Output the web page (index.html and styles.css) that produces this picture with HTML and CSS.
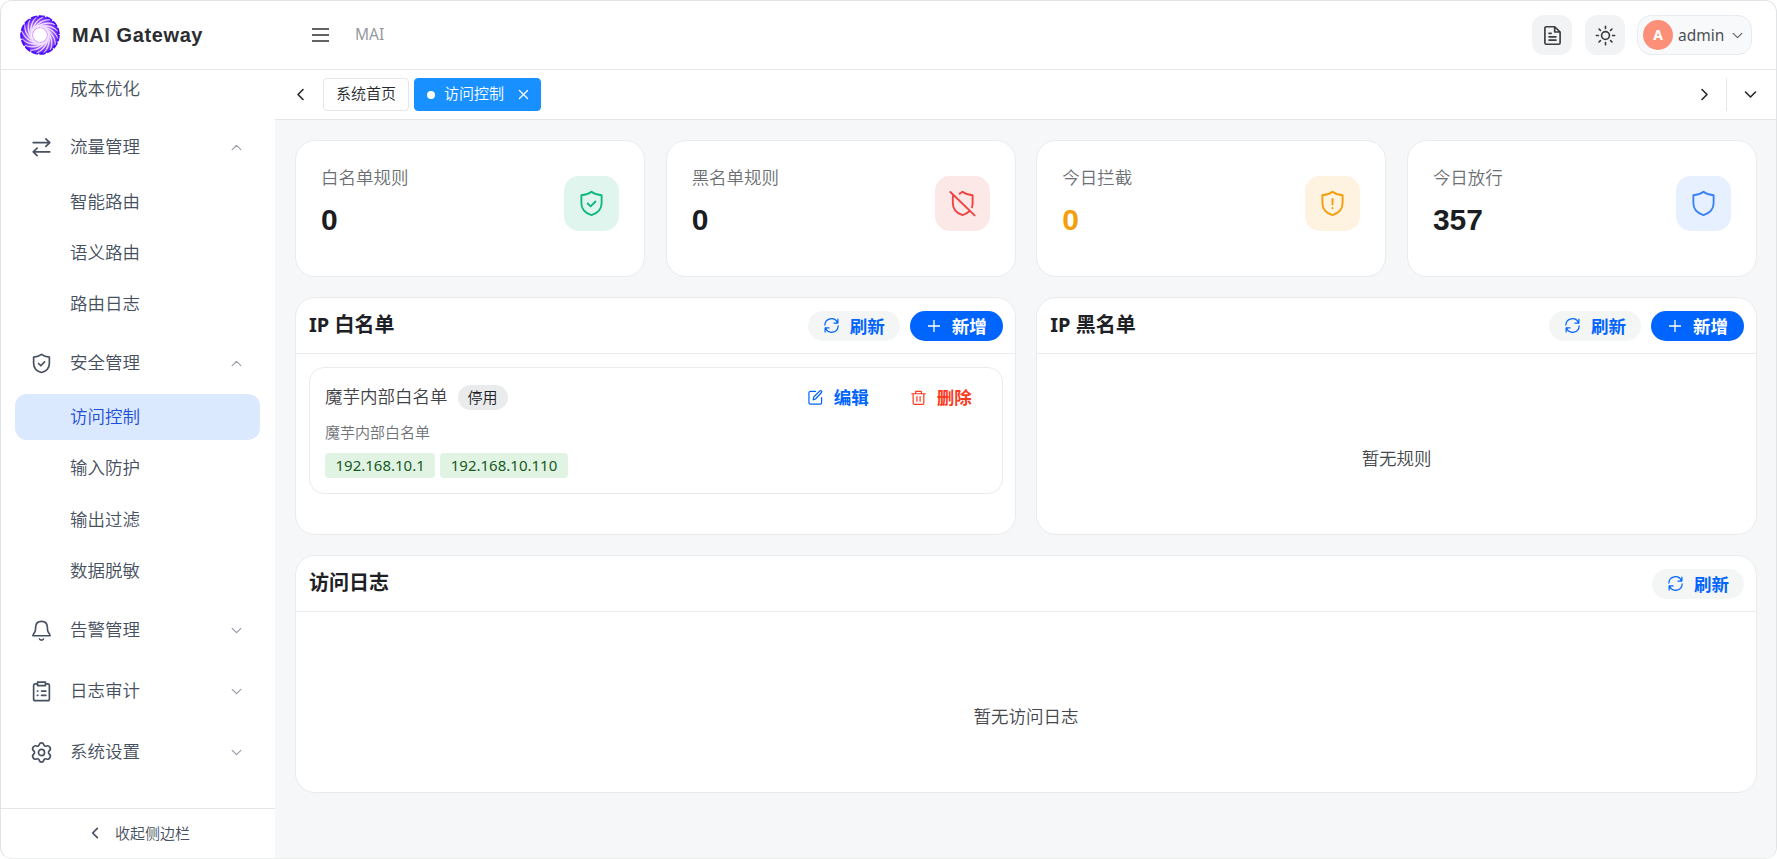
FILE: index.html
```html
<!DOCTYPE html>
<html lang="zh-CN">
<head>
<meta charset="utf-8">
<title>MAI Gateway</title>
<link rel="stylesheet" href="styles.css">
</head>
<body>
<svg class="defs" width="0" height="0">
  <defs>
    <radialGradient id="ring" cx="0" cy="0" r="20" gradientUnits="userSpaceOnUse">
      <stop offset=".35" stop-color="#cf8bff"/><stop offset=".7" stop-color="#9146fb"/><stop offset="1" stop-color="#4a12f5"/>
    </radialGradient>
    <path id="swirl" d="M-7.500 -3C-6 -10.500 3 -16.500 10 -15.200Q2 -15 -3.500 -8.500Q-6 -6 -7.500 -3z"/>
    <symbol id="shield" viewBox="0 0 24 24"><path d="M12 1.600C9.500 3.600 7 4.400 3 4.700v6.900c0 5.400 3.600 9.100 9 10.700 5.400-1.600 9-5.300 9-10.700V4.700C17 4.400 14.500 3.600 12 1.600z"/></symbol>
    <symbol id="shield-check" viewBox="0 0 24 24"><use href="#shield"/><path d="M8.600 12l2.600 2.600 4.300-4.400"/></symbol>
    <symbol id="down" viewBox="0 0 24 24"><path d="M4 8l8 8 8-8"/></symbol>
    <symbol id="up" viewBox="0 0 24 24"><path d="M4 16l8-8 8 8"/></symbol>
    <symbol id="left" viewBox="0 0 24 24"><path d="M16 4l-8 8 8 8"/></symbol>
    <symbol id="right" viewBox="0 0 24 24"><path d="M8 4l8 8-8 8"/></symbol>
    <symbol id="plus" viewBox="0 0 12 12"><path d="M6 0v12M0 6h12"/></symbol>
    <symbol id="refresh" viewBox="0 0 16 16"><path d="M.9 7.500A7 7 0 0 1 14.300 5M14.800 1.200v4.200h-4.200M15.100 8.500A7 7 0 0 1 1.700 11M1.200 14.800v-4.200h4.200"/></symbol>
  </defs>
</svg>
<div class="window">
  <header class="header">
    <div class="brand">
      <svg class="logo" viewBox="-20 -20 40 40">
        <circle r="12.900" fill="none" stroke="url(#ring)" stroke-width="11.800"/>
        <circle r="18.800" fill="none" stroke="#4a12f5" stroke-width="2" stroke-dasharray="6.400 1.470"/>
        <g class="swirls">
          <use href="#swirl"/><use href="#swirl" transform="rotate(22.500)"/><use href="#swirl" transform="rotate(45)"/><use href="#swirl" transform="rotate(67.500)"/>
          <use href="#swirl" transform="rotate(90)"/><use href="#swirl" transform="rotate(112.500)"/><use href="#swirl" transform="rotate(135)"/><use href="#swirl" transform="rotate(157.500)"/>
          <use href="#swirl" transform="rotate(180)"/><use href="#swirl" transform="rotate(202.500)"/><use href="#swirl" transform="rotate(225)"/><use href="#swirl" transform="rotate(247.500)"/>
          <use href="#swirl" transform="rotate(270)"/><use href="#swirl" transform="rotate(292.500)"/><use href="#swirl" transform="rotate(315)"/><use href="#swirl" transform="rotate(337.500)"/>
        </g>
      </svg>
      <span class="brand-name">MAI Gateway</span>
    </div>
    <svg class="menu-icon" viewBox="0 0 17 14"><path d="M0 1h17M0 7h17M0 13h17"/></svg>
    <span class="crumb">MAI</span>
    <div class="tools">
      <button class="tool"><svg class="icon i24" viewBox="0 0 24 24"><path d="M14.500 2H5a1.700 1.700 0 0 0-1.700 1.700v16.600A1.700 1.700 0 0 0 5 22h14a1.700 1.700 0 0 0 1.700-1.700V8zM14.500 2v6h6.200M8 9.500h2.500M8 13.500h8M8 17.300h8"/></svg></button>
      <button class="tool"><svg class="icon i24" viewBox="0 0 24 24"><circle cx="12" cy="12" r="4.500"/><path d="M12 1.500v2.400M12 20.100v2.400M1.500 12h2.400M20.100 12h2.400M4.600 4.600l1.600 1.600M17.800 17.800l1.600 1.600M4.600 19.400l1.600-1.600M17.800 6.200l1.600-1.600"/></svg></button>
      <div class="user"><span class="avatar">A</span><span class="user-name">admin</span><svg class="icon user-arrow"><use href="#down"/></svg></div>
    </div>
  </header>
  <div class="body">
    <aside class="sidebar">
      <nav class="nav">
        <ul class="sub first"><li>成本优化</li></ul>
        <div class="group"><svg class="icon g-icon" viewBox="0 0 24 24"><path d="M2.500 6.500h19M17 2.200l4.500 4.300-4.500 4.300M21.500 17h-19M7 12.700L2.500 17 7 21.300"/></svg><span>流量管理</span><svg class="icon arrow"><use href="#up"/></svg></div>
        <ul class="sub"><li>智能路由</li><li>语义路由</li><li>路由日志</li></ul>
        <div class="group"><svg class="icon g-icon"><use href="#shield-check"/></svg><span>安全管理</span><svg class="icon arrow"><use href="#up"/></svg></div>
        <ul class="sub"><li class="active">访问控制</li><li>输入防护</li><li>输出过滤</li><li>数据脱敏</li></ul>
        <div class="group"><svg class="icon g-icon" viewBox="0 0 24 24"><path d="M12 1.500c-4 0-6.500 2.700-6.700 6.500l-.3 4c-.1 1.200-.8 2-1.500 3-.8 1.200-1.300 2.200-1.300 3h19.600c0-.8-.5-1.800-1.300-3-.7-1-1.400-1.800-1.500-3l-.3-4C18.500 4.200 16 1.500 12 1.500zM9.800 21.800a2.600 2.600 0 0 0 4.400 0"/></svg><span>告警管理</span><svg class="icon arrow"><use href="#down"/></svg></div>
        <div class="group"><svg class="icon g-icon" viewBox="0 0 24 24"><path d="M7.500 3.200H5A2 2 0 0 0 3 5.200v15.300a2 2 0 0 0 2 2h14a2 2 0 0 0 2-2V5.200a2 2 0 0 0-2-2h-2.500M7.500 1.300h9v4h-9zM7.300 11.500h.5M12 11.500H17M7.300 16.500h.5M12 16.500H17"/></svg><span>日志审计</span><svg class="icon arrow"><use href="#down"/></svg></div>
        <div class="group"><svg class="icon g-icon" viewBox="0 0 24 24"><path d="M9.500 2.800Q10 1 12 1t2.500 1.800c.3 1.700 1.700 2.500 3.200 1.800 1.800-.8 2.900-.3 3.900 1.400s.9 2.900-.6 4c-1.400 1-1.400 3 0 4 1.500 1.100 1.600 2.300.6 4s-2.100 2.200-3.900 1.400c-1.500-.7-2.900.1-3.200 1.800Q14 23 12 23t-2.500-1.800c-.3-1.700-1.700-2.500-3.200-1.800-1.800.8-2.900.3-3.900-1.400s-.9-2.900.6-4c1.400-1 1.400-3 0-4-1.500-1.100-1.600-2.300-.6-4s2.100-2.200 3.900-1.400c1.500.7 2.900-.1 3.200-1.800z"/><circle cx="12" cy="12" r="3.500"/></svg><span>系统设置</span><svg class="icon arrow"><use href="#down"/></svg></div>
      </nav>
      <div class="collapse"><svg class="icon collapse-icon"><use href="#left"/></svg><span>收起侧边栏</span></div>
    </aside>
    <main class="main">
      <div class="tabs">
        <svg class="icon tab-arrow"><use href="#left"/></svg>
        <span class="tab">系统首页</span>
        <span class="tab current"><i class="dot"></i>访问控制<svg class="icon close" viewBox="0 0 10 10"><path d="M.5.500l9 9M9.500.500l-9 9"/></svg></span>
        <svg class="icon tab-arrow next"><use href="#right"/></svg>
        <i class="split"></i>
        <svg class="icon tab-arrow more"><use href="#down"/></svg>
      </div>
      <div class="content">
        <section class="stats">
          <article class="card stat"><div><p class="label">白名单规则</p><p class="value">0</p></div><span class="badge green"><svg class="icon"><use href="#shield-check"/></svg></span></article>
          <article class="card stat"><div><p class="label">黑名单规则</p><p class="value">0</p></div><span class="badge red"><svg class="icon" viewBox="0 0 24 24"><path d="M9.500 3.300Q10.800 2.600 12 1.600C14.500 3.600 17 4.400 21 4.700v6.900c0 1.400-.2 2.600-.6 3.700M3.400 5.400v6.200c0 5.400 3.400 9.100 8.600 10.700 2.400-.7 4.500-1.800 6.100-3.400M1.200 1.800l21.600 20.800"/></svg></span></article>
          <article class="card stat"><div><p class="label">今日拦截</p><p class="value warn">0</p></div><span class="badge orange"><svg class="icon" viewBox="0 0 24 24"><use href="#shield"/><path d="M12 8v4.800M12 15.900v.300"/></svg></span></article>
          <article class="card stat"><div><p class="label">今日放行</p><p class="value">357</p></div><span class="badge blue"><svg class="icon"><use href="#shield"/></svg></span></article>
        </section>
        <section class="lists">
          <article class="card panel">
            <div class="panel-head"><h2>IP 白名单</h2><button class="btn ghost"><svg class="icon i16"><use href="#refresh"/></svg>刷新</button><button class="btn primary"><svg class="icon i12"><use href="#plus"/></svg>新增</button></div>
            <div class="panel-body">
              <div class="rule">
                <div class="rule-top"><span class="rule-name">魔芋内部白名单</span><span class="state">停用</span>
                  <a class="link edit"><svg class="icon i16" viewBox="0 0 16 16"><path d="M8 1.500H2.500A1.500 1.500 0 0 0 1 3v10.500A1.500 1.500 0 0 0 2.500 15H13a1.500 1.500 0 0 0 1.500-1.500V8M5.500 10.500l.6-3L12.700.9q.8-.6 1.600.100t.1 1.700L8 9.600z"/></svg>编辑</a>
                  <a class="link del"><svg class="icon i16" viewBox="0 0 16 16"><path d="M.8 4h14.400M5 3.800V1.500h6v2.300M2.300 4v10q0 1.300 1.300 1.300h8.800q1.300 0 1.300-1.300V4M6.300 7v5M9.700 7v5"/></svg>删除</a>
                </div>
                <p class="desc">魔芋内部白名单</p>
                <div class="ips"><span class="ip">192.168.10.1</span><span class="ip">192.168.10.110</span></div>
              </div>
            </div>
          </article>
          <article class="card panel">
            <div class="panel-head"><h2>IP 黑名单</h2><button class="btn ghost"><svg class="icon i16"><use href="#refresh"/></svg>刷新</button><button class="btn primary"><svg class="icon i12"><use href="#plus"/></svg>新增</button></div>
            <p class="empty">暂无规则</p>
          </article>
        </section>
        <article class="card panel">
          <div class="panel-head"><h2>访问日志</h2><button class="btn ghost"><svg class="icon i16"><use href="#refresh"/></svg>刷新</button></div>
          <p class="empty">暂无访问日志</p>
        </article>
      </div>
    </main>
  </div>
</div>
</body>
</html>
```

FILE: styles.css
```css
* { box-sizing: border-box; margin: 0; padding: 0; }
body { background: #fff; font: 350 17.5px/24px "Noto Sans", "Noto Sans CJK SC", sans-serif; color: #303133; overflow: hidden; }
ul { list-style: none; }
button { border: 0; font: inherit; }
.defs { display: block; height: 0; }
.icon { fill: none; stroke: currentColor; stroke-width: 1.9; stroke-linecap: round; stroke-linejoin: round; overflow: visible; flex: none; }
.i24 { width: 21px; height: 21px; }
.i16 { width: 15px; height: 15px; stroke-width: 1.3; }
.i12 { width: 12px; height: 12px; stroke-width: 1.3; }

.window { width: 1777px; height: 859px; border: 1px solid #e2e3e5; border-bottom-color: #eceded; border-radius: 12px; overflow: hidden; display: flex; flex-direction: column; background: #fff; }

.header { height: 69px; flex: none; border-bottom: 1px solid #e4e6e9; display: flex; align-items: center; padding: 0 24px 0 19px; }
.brand { display: flex; align-items: center; gap: 12px; width: 292px; }
.logo { width: 40px; height: 40px; }
.swirls { fill: #fff; stroke: #fff; stroke-width: .45; opacity: .88; }
.brand-name { font: 700 20px/28px "Liberation Sans", Arial, sans-serif; letter-spacing: .6px; color: #2b2d31; }
.menu-icon { width: 17px; height: 14px; stroke: #303133; stroke-width: 1.7; overflow: visible; }
.crumb { margin-left: 26px; font-size: 15.5px; font-weight: 400; color: #96989d; padding-bottom: 2px; }
.tools { margin-left: auto; display: flex; align-items: center; }
.tool { width: 40px; height: 40px; border-radius: 12px; background: #f2f3f5; color: #3c3e42; display: flex; align-items: center; justify-content: center; margin-right: 13px; }
.tool + .tool { margin-right: 12px; }
.user { width: 115px; height: 40px; border: 1px solid #e6ecf2; border-radius: 14px; background: #f8f9fb; display: flex; align-items: center; padding-left: 5px; }
.avatar { width: 30px; height: 30px; border-radius: 50%; background: #fc8f78; color: #fff; font-weight: 700; font-size: 14px; line-height: 29px; text-align: center; }
.user-name { margin-left: 5px; font-size: 15.5px; font-weight: 400; color: #4c4f55; width: 53px; }
.user-arrow { width: 13px; height: 13px; color: #606266; stroke-width: 2.2; }

.body { flex: 1; min-height: 0; display: flex; }
.sidebar { width: 274px; flex: none; display: flex; flex-direction: column; color: #465060; }
.nav { flex: 1; min-height: 0; overflow: hidden; padding: 0 15px 0 14px; }
.sub li { height: 46px; margin-bottom: 5.4px; padding-left: 55px; line-height: 44px; border-radius: 12px; }
.sub.first { margin-top: -4px; }
.sub .active { background: #dbe9fe; color: #1d4ed8; }
.group { height: 61.2px; display: flex; align-items: center; padding: 0 17px 0 16px; }
.group span { margin-left: 18px; line-height: 26px; padding-bottom: 3px; }
.g-icon { width: 21px; height: 21px; stroke-width: 1.9; }
.arrow { width: 13px; height: 13px; margin-left: auto; color: #979daa; stroke-width: 2.3; }
.collapse { height: 50px; flex: none; border-top: 1px solid #e4e6e9; display: flex; align-items: center; justify-content: center; gap: 13px; font-size: 15px; padding: 0 0 1px 2px; }
.collapse-icon { width: 14px; height: 14px; stroke-width: 3; }

.main { flex: 1; min-width: 0; display: flex; flex-direction: column; background: #f6f7f9; }
.tabs { height: 50px; flex: none; background: #fff; border-bottom: 1px solid #e4e7ea; display: flex; align-items: center; padding: 0 18px 0 18px; font-size: 15px; color: #26282c; }
.tab-arrow { width: 15px; height: 15px; stroke-width: 2.6; }
.tab { margin-left: 15px; height: 33px; padding: 0 12px 3px; border: 1px solid #e4e6ea; border-radius: 4px; display: flex; align-items: center; }
.tab.current { margin-left: 5px; background: #1890ff; border-color: #1890ff; color: #fff; padding-right: 12px; }
.dot { width: 8px; height: 8px; border-radius: 50%; background: #fff; margin: 3px 9px 0 0; }
.close { width: 9px; height: 9px; margin: 3px 0 0 15px; stroke-width: 1.4; }
.next { margin-left: auto; }
.split { width: 1px; height: 33px; background: #e4e6ea; margin: 0 16px 0 14px; }

.content { padding: 20px 19px 0 20px; display: flex; flex-direction: column; gap: 20px; }
.card { background: #fff; border: 1px solid #eaebed; border-radius: 20px; }
.stats { display: grid; grid-template-columns: repeat(4, 1fr); gap: 20.5px; }
.stat { height: 137px; padding: 24px 25px 0; display: flex; justify-content: space-between; }
.label { color: #6c6f74; line-height: 24px; }
.value { font: 700 30px/36px "Liberation Sans", Arial, sans-serif; color: #1a1d21; margin-top: 13px; }
.value.warn { color: #f59e0b; }
.badge { width: 55px; height: 55px; margin-top: 11px; border-radius: 15px; display: flex; align-items: center; justify-content: center; }
.badge .icon { width: 27px; height: 27px; stroke-width: 1.7; }
.green { background: #e0f5ed; color: #10b981; }
.red { background: #fde8e8; color: #ef4444; }
.orange { background: #fef2e0; color: #f59e0b; }
.blue { background: #e7f0ff; color: #3b82f6; }

.lists { display: grid; grid-template-columns: 1fr 1fr; gap: 20.5px; }
.panel { height: 238px; }
.panel-head { height: 56px; border-bottom: 1px solid #eaebed; display: flex; align-items: center; gap: 10px; padding: 0 12px 0 13px; }
.panel-head h2 { margin-right: auto; font-size: 20px; font-weight: 700; line-height: 28px; color: #1d2024; padding-bottom: 1px; }
.btn { height: 30px; border-radius: 15px; display: flex; align-items: center; font-weight: 700; line-height: 28px; }
.ghost { background: #f4f6f6; color: #0064ff; padding: 0 15px 0 16px; gap: 11px; }
.primary { background: #0064ff; color: #fff; padding: 0 16px 0 18px; gap: 12px; }
.panel-body { padding: 13px 12px 0 13px; }
.rule { height: 127px; border: 1px solid #eaebed; border-radius: 15px; padding: 16px 30px 0 15px; }
.rule-top { display: flex; align-items: center; height: 26px; }
.rule-name { color: #3f4247; padding-bottom: 2px; }
.state { margin-left: 10px; width: 50px; height: 25px; border-radius: 13px; background: #e9ebec; font-size: 15px; line-height: 25px; text-align: center; color: #1d2024; }
.link { display: flex; align-items: center; gap: 11px; font-weight: 700; }
.edit { margin-left: auto; color: #0064ff; }
.del { margin-left: 42px; color: #fb3b1e; }
.desc { font-size: 15px; color: #6f7277; margin-top: 11px; line-height: 22px; }
.ips { display: flex; gap: 5px; margin-top: 10px; }
.ip { height: 25px; border-radius: 4px; background: #e1f4e4; color: #17591f; font-size: 15px; font-weight: 400; line-height: 25px; padding: 0 10.500px; }
.empty { text-align: center; color: #44474c; line-height: 24px; margin-top: 92px; }
```
